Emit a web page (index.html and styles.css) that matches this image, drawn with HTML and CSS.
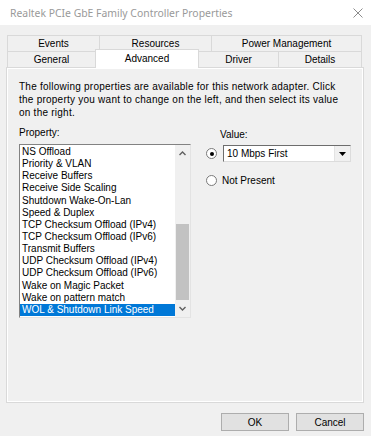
FILE: index.html
```html
<!DOCTYPE html>
<html lang="en">
<head>
    <meta charset="UTF-8">
    <title>Realtek PCIe GbE Family Controller Properties</title>
    <link rel="stylesheet" href="styles.css">
</head>
<body>
    <div class="window">
        <div class="titlebar">
            <span class="title">Realtek PCIe GbE Family Controller Properties</span>
            <svg class="close" width="10" height="10" viewBox="0 0 10 10">
                <path d="M0.5 0.5 L9.5 9.5 M9.5 0.5 L0.5 9.5" stroke="#8c8c8c" stroke-width="1" fill="none"/>
            </svg>
        </div>

        <div class="tabs">
            <div class="tab-row">
                <div class="tab w-events">Events</div>
                <div class="tab w-resources">Resources</div>
                <div class="tab w-power">Power Management</div>
            </div>
            <div class="tab-row">
                <div class="tab w-general">General</div>
                <div class="tab w-advanced selected">Advanced</div>
                <div class="tab w-driver">Driver</div>
                <div class="tab w-details">Details</div>
            </div>
        </div>

        <div class="panel">
            <p class="intro">The following properties are available for this network adapter. Click<br>
            the property you want to change on the left, and then select its value<br>
            on the right.</p>

            <div class="columns">
                <div class="prop-col">
                    <div class="label">Property:</div>
                    <div class="listbox">
                        <div class="items">
                            <div class="item">NS Offload</div>
                            <div class="item">Priority &amp; VLAN</div>
                            <div class="item">Receive Buffers</div>
                            <div class="item">Receive Side Scaling</div>
                            <div class="item">Shutdown Wake-On-Lan</div>
                            <div class="item">Speed &amp; Duplex</div>
                            <div class="item">TCP Checksum Offload (IPv4)</div>
                            <div class="item">TCP Checksum Offload (IPv6)</div>
                            <div class="item">Transmit Buffers</div>
                            <div class="item">UDP Checksum Offload (IPv4)</div>
                            <div class="item">UDP Checksum Offload (IPv6)</div>
                            <div class="item">Wake on Magic Packet</div>
                            <div class="item">Wake on pattern match</div>
                            <div class="item active">WOL &amp; Shutdown Link Speed</div>
                        </div>
                        <div class="scrollbar">
                            <div class="arrow">
                                <svg width="7" height="5" viewBox="0 0 7 5"><path d="M0.5 4 L3.5 1 L6.5 4" stroke="#606060" stroke-width="1.4" fill="none"/></svg>
                            </div>
                            <div class="track"><div class="thumb"></div></div>
                            <div class="arrow">
                                <svg width="7" height="5" viewBox="0 0 7 5"><path d="M0.5 1 L3.5 4 L6.5 1" stroke="#606060" stroke-width="1.4" fill="none"/></svg>
                            </div>
                        </div>
                    </div>
                </div>

                <div class="value-col">
                    <div class="label value-label">Value:</div>
                    <div class="option">
                        <span class="radio checked"></span>
                        <div class="combo">
                            <span class="combo-text">10 Mbps First</span>
                            <span class="combo-btn">
                                <svg width="7" height="4" viewBox="0 0 7 4"><path d="M0 0 H7 L3.5 4 Z" fill="#000"/></svg>
                            </span>
                        </div>
                    </div>
                    <div class="option second">
                        <span class="radio"></span>
                        <span class="option-text">Not Present</span>
                    </div>
                </div>
            </div>
        </div>

        <div class="buttons">
            <button class="btn">OK</button>
            <button class="btn">Cancel</button>
        </div>
    </div>
</body>
</html>
```

FILE: styles.css
```css
body {
    margin: 0;
    background: #f0f0f0;
    font-family: "Liberation Sans", Arial, sans-serif;
    font-size: 10px;
    color: #000;
}
.window {
    width: 371px;
    height: 436px;
    background: #f0f0f0;
    display: flex;
    flex-direction: column;
}
.titlebar {
    height: 25px;
    background: #fff;
    display: flex;
    align-items: center;
    justify-content: space-between;
    padding: 0 8px 0 10px;
}
.title {
    color: #999;
    font-family: "Noto Sans", sans-serif;
    font-size: 10.4px;
}

/* tabs */
.tabs {
    margin: 10px 9px 0 7px;
}
.tab-row {
    display: flex;
    height: 16px;
}
.tab {
    box-sizing: border-box;
    border: 1px solid #d9d9d9;
    border-bottom: none;
    border-left: none;
    background: #f0f0f0;
    text-align: center;
    line-height: 16px;
}
.tab-row .tab:first-child {
    border-left: 1px solid #d9d9d9;
}
.w-events { width: 93px; }
.w-resources { width: 112px; }
.w-power { width: 150px; }
.w-general { width: 89px; }
.w-advanced { width: 103px; }
.w-driver { width: 80px; }
.w-details { width: 83px; }
.tab.selected {
    position: relative;
    z-index: 1;
    background: #fff;
    height: 19px;
    margin-top: -2px;
    line-height: 17px;
    border-left: 1px solid #d9d9d9;
    margin-left: -1px;
    width: 104px;
}

/* panel */
.panel {
    box-sizing: border-box;
    margin: 0 7px 0 6px;
    height: 336px;
    border: 1px solid #d9d9d9;
    box-shadow: inset 1px 1px #fff, inset -1px -1px #fff;
    padding: 12px 12px;
}
.intro {
    margin: 0;
    line-height: 13px;
    letter-spacing: 0.24px;
}
.columns {
    display: flex;
    gap: 15px;
    margin-top: 7px;
}
.label {
    line-height: 13px;
}
.prop-col {
    width: 173px;
}
.listbox {
    box-sizing: border-box;
    margin-top: 5px;
    height: 174px;
    display: flex;
    background: #fff;
    border: 1px solid #828282;
    border-right-color: #e3e3e3;
    border-bottom-color: #e3e3e3;
}
.items {
    flex: 1;
    padding-top: 1px;
}
.item {
    height: 12.15px;
    line-height: 12px;
    padding-left: 2px;
    white-space: nowrap;
}
.item.active {
    background: #0078d7;
    color: #fff;
}
.scrollbar {
    width: 15px;
    display: flex;
    flex-direction: column;
    background: #f0f0f0;
}
.arrow {
    height: 17px;
    display: flex;
    align-items: center;
    justify-content: center;
}
.track {
    flex: 1;
    display: flex;
    flex-direction: column;
    justify-content: flex-end;
}
.thumb {
    height: 76px;
    margin: 0 1px;
    background: #c2c2c2;
}

/* value side */
.value-col {
    padding-top: 2px;
}
.value-label {
    margin-left: 14px;
}
.option {
    display: flex;
    align-items: center;
    gap: 6px;
    margin-top: 4px;
}
.option.second {
    margin-top: 12px;
    gap: 5px;
}
.radio {
    box-sizing: border-box;
    width: 11px;
    height: 11px;
    border-radius: 50%;
    border: 1px solid #7a7a7a;
    background: #fff;
    display: flex;
    align-items: center;
    justify-content: center;
}
.radio.checked::after {
    content: "";
    width: 4px;
    height: 4px;
    border-radius: 50%;
    background: #000;
}
.option-text {
    line-height: 13px;
}
.combo {
    box-sizing: border-box;
    width: 128px;
    height: 17px;
    display: flex;
    align-items: stretch;
    background: #fff;
    border: 1px solid #6d6d6d;
    border-right-color: #dcdcdc;
    border-bottom-color: #dcdcdc;
}
.combo-text {
    flex: 1;
    padding-left: 3px;
    line-height: 15px;
}
.combo-btn {
    width: 15px;
    display: flex;
    align-items: center;
    justify-content: center;
    background: #f0f0f0;
    border-left: 1px solid #e3e3e3;
}

/* buttons */
.buttons {
    display: flex;
    justify-content: flex-end;
    gap: 7px;
    padding: 10px 7px 0 0;
}
.btn {
    width: 68px;
    height: 18px;
    padding: 0;
    background: #e1e1e1;
    border: 1px solid #adadad;
    font-family: "Liberation Sans", Arial, sans-serif;
    font-size: 10px;
    color: #000;
}
```
